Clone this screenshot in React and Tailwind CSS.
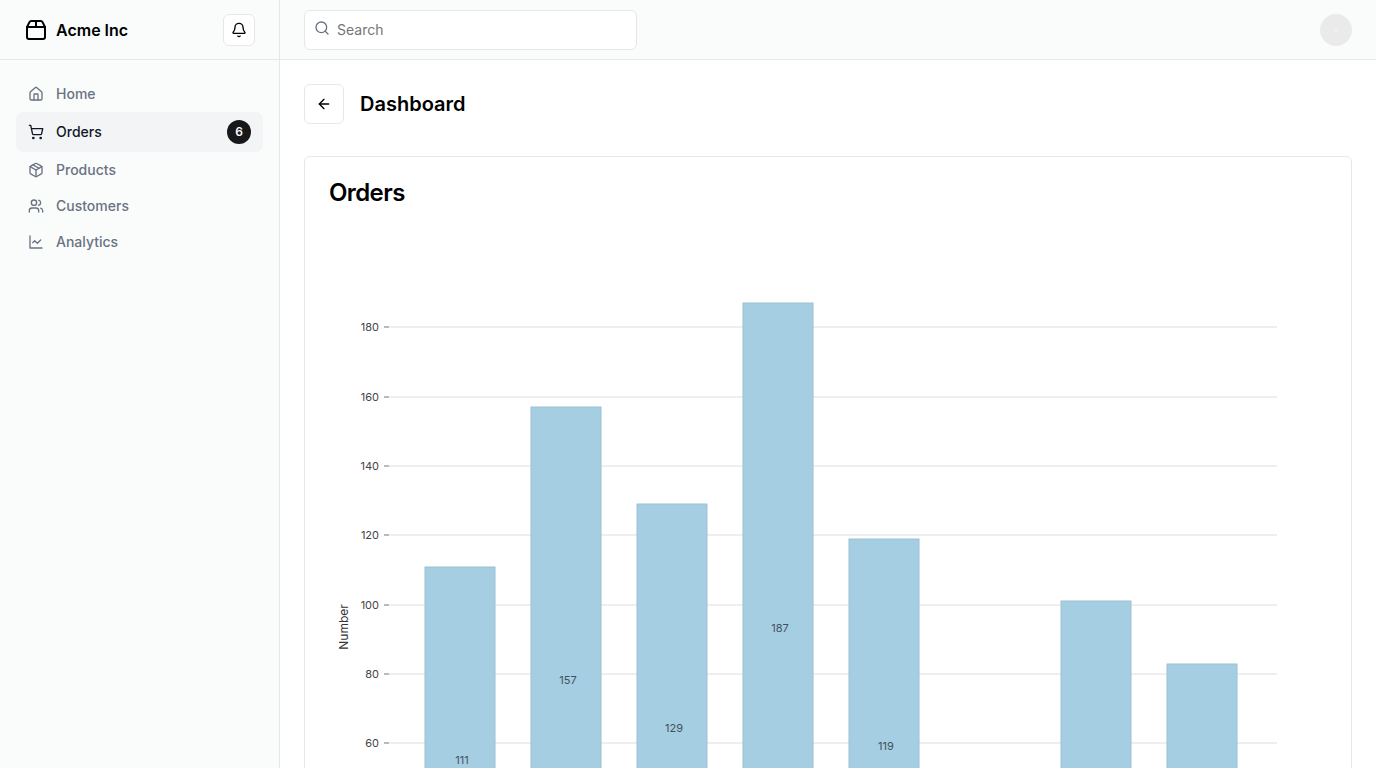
import { useLayoutEffect, useRef, useState } from "react";
import { ArrowLeft, Bell, House, Package, Package2, Search, ShoppingCart, Users } from "lucide-react";

function LineChartIcon({ className }) {
  return (
    <svg className={className} viewBox="0 0 24 24" fill="none" stroke="currentColor" strokeWidth="2" strokeLinecap="round" strokeLinejoin="round" aria-hidden="true">
      <path d="M3 3v18h18" />
      <path d="m19 9-5 5-4-4-3 3" />
    </svg>
  );
}

const NAV = [
  { label: "Home", icon: House },
  { label: "Orders", icon: ShoppingCart, active: true, count: 6 },
  { label: "Products", icon: Package },
  { label: "Customers", icon: Users },
  { label: "Analytics", icon: LineChartIcon },
];

const VALUES = [111, 157, 129, 187, 119, 42, 101, 83];
const TICKS = [0, 20, 40, 60, 80, 100, 120, 140, 160, 180];
const MARGIN = { top: 50, right: 50, bottom: 50, left: 60 };
const MAX = Math.max(...VALUES);
const UNIT_HEIGHT = 3.468;
const y = (value) => Math.round((MAX - value) * UNIT_HEIGHT);
const PLOT_HEIGHT = y(0);

function BarChart() {
  const box = useRef(null);
  const [width, setWidth] = useState(998);

  useLayoutEffect(() => {
    const update = () => setWidth(box.current.clientWidth);
    update();
    const observer = new ResizeObserver(update);
    observer.observe(box.current);
    return () => observer.disconnect();
  }, []);

  const plotWidth = Math.max(width - MARGIN.left - MARGIN.right, 80);
  const step = Math.floor(plotWidth / (VALUES.length + 0.33));
  const barWidth = Math.floor(step * 0.67) - 1;
  const start = step - barWidth;

  return (
    <div ref={box} className="w-full">
      <svg width={width} height={PLOT_HEIGHT + MARGIN.top + MARGIN.bottom} className="block" role="img" aria-label="Orders bar chart">
        <g transform={`translate(${MARGIN.left},${MARGIN.top})`} className="font-['Inter',sans-serif] text-[11px]">
          {TICKS.map((tick) => (
            <g key={tick} transform={`translate(0,${y(tick)})`}>
              <line x2={plotWidth} stroke="#dddddd" />
              <line x2={-5} stroke="#777777" />
              <text x={-10} textAnchor="end" dominantBaseline="central" fill="#444444">{tick}</text>
            </g>
          ))}
          <text transform={`translate(-46,${Math.floor(PLOT_HEIGHT / 2)}) rotate(-90)`} textAnchor="middle" dominantBaseline="central" fill="#333333" className="text-xs">
            Number
          </text>
          {VALUES.map((value, i) => (
            <g key={i} transform={`translate(${start + i * step},${y(value)})`}>
              <rect width={barWidth} height={PLOT_HEIGHT - y(value)} fill="#a6cee3" stroke="#9bc0d3" />
              <text x={barWidth / 2 + 2} y={(PLOT_HEIGHT - y(value)) / 2} textAnchor="middle" dominantBaseline="central" fill="#42525b">{value}</text>
            </g>
          ))}
        </g>
      </svg>
    </div>
  );
}

export default function App() {
  return (
    <div className="grid min-h-screen w-full grid-cols-[280px_1fr] bg-white font-['Inter',sans-serif] text-gray-950">
      <aside className="border-r border-gray-200 bg-[#fafcfb]">
        <div className="flex h-15 items-center border-b border-gray-200 px-6">
          <a href="#" className="flex items-center gap-2 font-semibold text-black">
            <Package2 className="size-6" />
            <span>Acme Inc</span>
          </a>
          <button type="button" aria-label="Toggle notifications" className="ml-auto flex size-8 items-center justify-center rounded-md border border-gray-200 bg-white text-black">
            <Bell className="size-4" />
          </button>
        </div>
        <nav className="grid px-4 py-4 text-sm font-medium">
          {NAV.map(({ label, icon: Icon, active, count }) => (
            <a
              key={label}
              href="#"
              aria-current={active ? "page" : undefined}
              className={
                active
                  ? "flex items-center gap-3 rounded-lg bg-gray-100 px-3 py-2 text-gray-900"
                  : "flex items-center gap-3 rounded-lg px-3 py-2 text-gray-500"
              }
            >
              <Icon className="size-4" />
              {label}
              {count && (
                <span className="ml-auto flex size-6 items-center justify-center rounded-full bg-[#18181b] text-xs font-semibold text-gray-50">
                  {count}
                </span>
              )}
            </a>
          ))}
        </nav>
      </aside>
      <div className="flex min-w-0 flex-col">
        <header className="flex h-15 items-center border-b border-gray-200 bg-[#fafcfb] px-6">
          <form className="min-w-0 flex-1">
            <label className="relative block w-1/3">
              <Search className="absolute top-2.5 left-2.5 size-4 text-gray-500" />
              <input type="search" aria-label="Search" placeholder="Search" className="h-10 w-full rounded-md border border-gray-200 bg-white pr-3 pl-8 text-sm placeholder:text-[#757575]" />
            </label>
          </form>
          <button type="button" aria-label="Toggle user menu" className="ml-4 flex size-8 items-center justify-center rounded-full bg-[#eaeaea]">
            <span className="size-1 rounded-full bg-[#efefef]" />
          </button>
        </header>
        <main className="flex flex-col gap-8 p-6">
          <div className="flex items-center gap-4">
            <button type="button" aria-label="Back" className="flex size-10 items-center justify-center rounded-md border border-gray-200 bg-white text-black">
              <ArrowLeft className="size-4" />
            </button>
            <h1 className="text-xl font-semibold text-black">Dashboard</h1>
          </div>
          <section className="rounded-md border border-gray-200 bg-white">
            <h2 className="p-6 text-2xl leading-6 font-semibold tracking-tight text-black">Orders</h2>
            <div className="px-6 pt-6 pb-6">
              <BarChart />
            </div>
          </section>
        </main>
      </div>
    </div>
  );
}
